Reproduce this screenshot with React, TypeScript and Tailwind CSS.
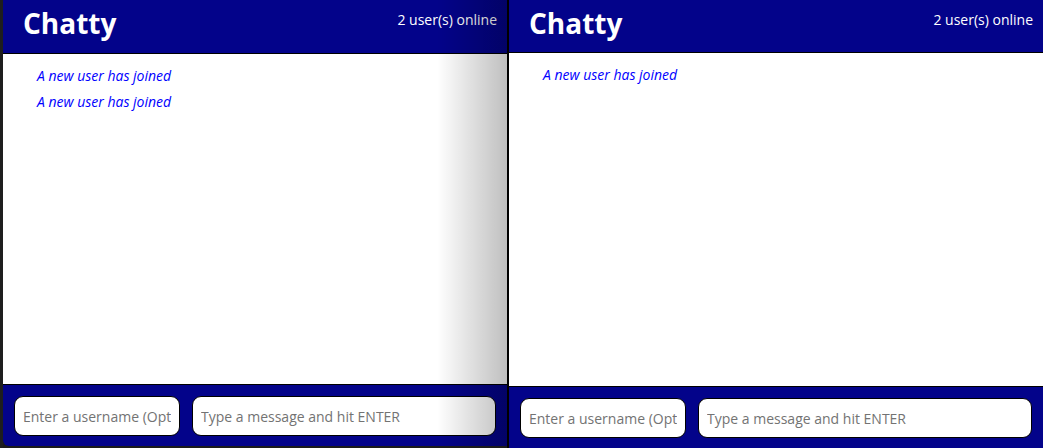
import React from "react";

const font = { fontFamily: '"Open Sans", "Noto Sans", sans-serif' };

function ChatWindow({
  headerH,
  messages,
}: {
  headerH: string;
  messages: string[];
}) {
  return (
    <div className="flex h-full flex-col">
      <header
        className={`flex ${headerH} shrink-0 items-start justify-between border-b border-black bg-[#03038a] pl-[20px] pr-[10px]`}
      >
        <h1 className="mt-[4px] text-[28px] font-bold leading-[38px] text-white">Chatty</h1>
        <span className="mt-[10px] text-[14px] leading-[20px] text-white">2 user(s) online</span>
      </header>
      <main className="flex-1 bg-white pl-[34px] pt-[12px]">
        {messages.map((m, i) => (
          <div key={i} className="h-[26px] text-[14px] italic leading-[20px] text-[#0000ff]">
            {m}
          </div>
        ))}
      </main>
      <footer className="flex shrink-0 gap-[12px] border-t border-black bg-[#03038a] px-[11px] pb-[10px] pt-[11px]">
        <input
          placeholder="Enter a username (Optional)"
          className="h-[40px] w-[166px] rounded-[9px] border border-black bg-white pl-[8px] pr-[8px] text-[14px] text-black outline-none placeholder:text-[#737373]"
          style={font}
        />
        <input
          placeholder="Type a message and hit ENTER"
          className="h-[40px] flex-1 rounded-[9px] border border-black bg-white px-[8px] text-[14px] text-black outline-none placeholder:text-[#737373]"
          style={font}
        />
      </footer>
    </div>
  );
}

export default function App() {
  return (
    <div className="flex h-[448px] w-[1043px] overflow-hidden bg-[#1b1b1b]" style={font}>
      <div className="w-[3px] shrink-0 bg-[#1e1e1e]" />
      <div className="relative h-[446px] w-[504px] shrink-0 overflow-hidden rounded-bl-[6px]">
        <ChatWindow headerH="h-[54px]" messages={["A new user has joined", "A new user has joined"]} />
        <div className="pointer-events-none absolute right-0 top-0 h-full w-[70px] bg-gradient-to-r from-transparent to-[rgba(0,0,0,0.25)]" />
      </div>
      <div className="relative z-10 h-[448px] flex-1 border-l-2 border-black">
        <ChatWindow headerH="h-[53px]" messages={["A new user has joined"]} />
      </div>
    </div>
  );
}
